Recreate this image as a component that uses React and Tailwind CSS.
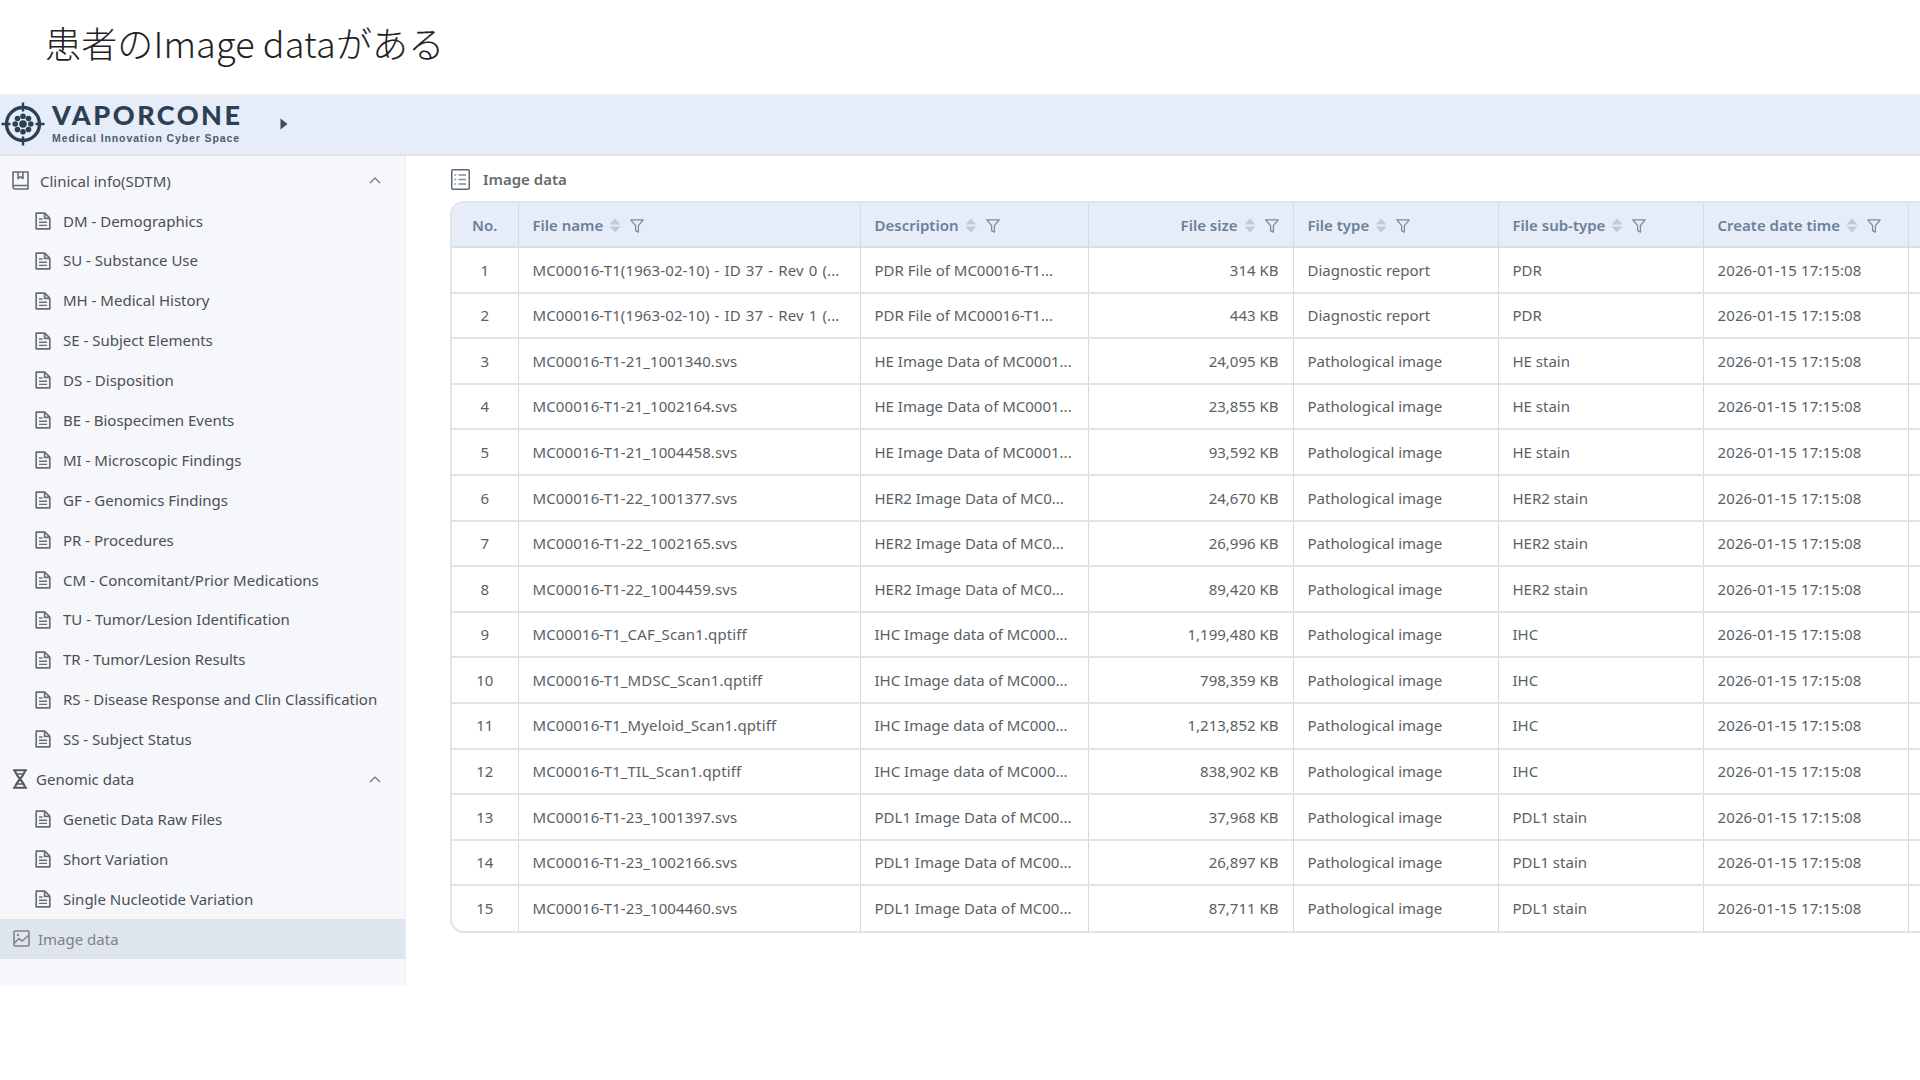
const clinicalItems = [
  'DM - Demographics',
  'SU - Substance Use',
  'MH - Medical History',
  'SE - Subject Elements',
  'DS - Disposition',
  'BE - Biospecimen Events',
  'MI - Microscopic Findings',
  'GF - Genomics Findings',
  'PR - Procedures',
  'CM - Concomitant/Prior Medications',
  'TU - Tumor/Lesion Identification',
  'TR - Tumor/Lesion Results',
  'RS - Disease Response and Clin Classification',
  'SS - Subject Status',
];

const genomicItems = ['Genetic Data Raw Files', 'Short Variation', 'Single Nucleotide Variation'];

const rows = [
  ['MC00016-T1(1963-02-10) - ID 37 - Rev 0 (...', 'PDR File of MC00016-T1...', '314 KB', 'Diagnostic report', 'PDR'],
  ['MC00016-T1(1963-02-10) - ID 37 - Rev 1 (...', 'PDR File of MC00016-T1...', '443 KB', 'Diagnostic report', 'PDR'],
  ['MC00016-T1-21_1001340.svs', 'HE Image Data of MC0001...', '24,095 KB', 'Pathological image', 'HE stain'],
  ['MC00016-T1-21_1002164.svs', 'HE Image Data of MC0001...', '23,855 KB', 'Pathological image', 'HE stain'],
  ['MC00016-T1-21_1004458.svs', 'HE Image Data of MC0001...', '93,592 KB', 'Pathological image', 'HE stain'],
  ['MC00016-T1-22_1001377.svs', 'HER2 Image Data of MC0...', '24,670 KB', 'Pathological image', 'HER2 stain'],
  ['MC00016-T1-22_1002165.svs', 'HER2 Image Data of MC0...', '26,996 KB', 'Pathological image', 'HER2 stain'],
  ['MC00016-T1-22_1004459.svs', 'HER2 Image Data of MC0...', '89,420 KB', 'Pathological image', 'HER2 stain'],
  ['MC00016-T1_CAF_Scan1.qptiff', 'IHC Image data of MC000...', '1,199,480 KB', 'Pathological image', 'IHC'],
  ['MC00016-T1_MDSC_Scan1.qptiff', 'IHC Image data of MC000...', '798,359 KB', 'Pathological image', 'IHC'],
  ['MC00016-T1_Myeloid_Scan1.qptiff', 'IHC Image data of MC000...', '1,213,852 KB', 'Pathological image', 'IHC'],
  ['MC00016-T1_TIL_Scan1.qptiff', 'IHC Image data of MC000...', '838,902 KB', 'Pathological image', 'IHC'],
  ['MC00016-T1-23_1001397.svs', 'PDL1 Image Data of MC00...', '37,968 KB', 'Pathological image', 'PDL1 stain'],
  ['MC00016-T1-23_1002166.svs', 'PDL1 Image Data of MC00...', '26,897 KB', 'Pathological image', 'PDL1 stain'],
  ['MC00016-T1-23_1004460.svs', 'PDL1 Image Data of MC00...', '87,711 KB', 'Pathological image', 'PDL1 stain'],
];

function DocIcon() {
  return (
    <svg viewBox="0 0 16 18" fill="none" stroke="#6a6e73" strokeWidth="1.7" className="w-4 h-[18px] shrink-0">
      <path d="M1.2 1.2h8.6l5 5v10.6H1.2z" strokeLinejoin="round" />
      <path d="M9.6 1.4v5h5" />
      <path d="M4 7h3.5M4 10.2h8M4 13.4h8" strokeWidth="1.4" />
    </svg>
  );
}

function BookIcon() {
  return (
    <svg viewBox="0 0 17 19" fill="none" stroke="#6a6e73" strokeWidth="1.6" className="w-[17px] h-[19px] shrink-0">
      <path d="M1 15.5V1h15v13.5H2.8A1.8 1.8 0 0 0 1 16.3 1.8 1.8 0 0 0 2.8 18H16v-3.5" strokeLinejoin="round" />
      <path d="M6 1v6.5l2.5-1.8L11 7.5V1" strokeLinejoin="round" />
    </svg>
  );
}

function DnaIcon() {
  return (
    <svg viewBox="0 0 16 20" fill="none" stroke="#55595e" strokeWidth="2.1" className="w-4 h-5 shrink-0">
      <path d="M1 1.2h14M1 18.8h14" />
      <path d="M3 1c0 6 10 12 10 18M13 1c0 6-10 12-10 18" />
      <path d="M4 5h8M4 15h8" strokeWidth="1.6" />
    </svg>
  );
}

function ImageIcon() {
  return (
    <svg viewBox="0 0 17 17" fill="none" stroke="#7d8287" strokeWidth="1.6" className="w-[17px] h-[17px] shrink-0">
      <rect x="1" y="1" width="15" height="15" rx="1" />
      <circle cx="5" cy="5" r="1.2" fill="#7d8287" stroke="none" />
      <path d="M1.5 13l4.5-4.5 3 2.5 6.5-5.5" />
    </svg>
  );
}

function ListIcon() {
  return (
    <svg viewBox="0 0 19 21" fill="none" stroke="#5d6877" className="w-[19px] h-[21px] shrink-0">
      <rect x="0.75" y="0.75" width="17.5" height="19.5" rx="1" strokeWidth="1.5" />
      <path d="M7.5 6h7.5M7.5 10.5h7.5M7.5 15h7.5" strokeWidth="1.6" stroke="#7f8a99" />
      <path d="M3.5 6h1.7M3.5 10.5h1.7M3.5 15h1.7" strokeWidth="1.6" stroke="#7f8a99" />
    </svg>
  );
}

function Chevron() {
  return (
    <svg viewBox="0 0 12 7" fill="none" stroke="#6b7075" strokeWidth="1.2" className="w-3 h-[7px] shrink-0">
      <path d="M1 6l5-5 5 5" />
    </svg>
  );
}

function SortCaret() {
  return (
    <svg viewBox="0 0 12 15" className="w-3 h-[15px] shrink-0" fill="#c2cad6">
      <path d="M6 0.5L11.5 6.5H0.5z" />
      <path d="M6 14.5L0.5 8.5h11z" />
    </svg>
  );
}

function FunnelIcon() {
  return (
    <svg viewBox="0 0 14 14" fill="none" stroke="#7a8aa2" strokeWidth="1.3" className="w-[14px] h-[14px] shrink-0 mt-0.5">
      <path d="M0.8 0.8h12.4L8.4 6.6v6.6L5.6 11.6V6.6z" strokeLinejoin="round" />
    </svg>
  );
}

function Logo() {
  const petals = [0, 45, 90, 135, 180, 225, 270, 315];
  return (
    <svg viewBox="0 0 44 44" className="w-11 h-11 shrink-0" fill="none" stroke="#2b4055">
      <circle cx="22" cy="22" r="16.5" strokeWidth="3.4" />
      <path d="M22 0.5v9M22 34.5v9M0.5 22h9M34.5 22h9" strokeWidth="2.4" />
      <circle cx="22" cy="22" r="3.8" fill="#2b4055" stroke="none" />
      {petals.map((a) => (
        <circle
          key={a}
          cx={22 + 7.8 * Math.cos((a * Math.PI) / 180)}
          cy={22 + 7.8 * Math.sin((a * Math.PI) / 180)}
          r="2.8"
          fill="#2b4055"
          stroke="none"
        />
      ))}
    </svg>
  );
}

function SideLink({ label }) {
  return (
    <div className="h-[39.9px] flex items-center gap-3 pl-[35px]">
      <DocIcon />
      <span className="text-[15px] text-[#4b4f54] whitespace-nowrap">{label}</span>
    </div>
  );
}

function SideGroup({ icon, label, gap }) {
  return (
    <div className="h-[39.9px] flex items-center justify-between pl-3 pr-6">
      <div className={`flex items-center ${gap}`}>
        {icon}
        <span className="text-[15px] text-[#4b4f54] whitespace-nowrap">{label}</span>
      </div>
      <Chevron />
    </div>
  );
}

function HeadCell({ label, right }) {
  return (
    <th className="bg-[#e6edf8] border-r border-[#d3dae6] px-[14px] pt-[1px] font-semibold text-[15px] text-[#6c7f99] text-left">
      <div className={`flex items-center gap-[6px] ${right ? 'justify-end' : ''}`}>
        <span className="whitespace-nowrap">{label}</span>
        <SortCaret />
        <span className="ml-[3px]"><FunnelIcon /></span>
      </div>
    </th>
  );
}

export default function App() {
  return (
    <div className="w-[1920px] h-[1080px] overflow-hidden bg-white font-['Noto_Sans','Noto_Sans_CJK_JP',sans-serif]">
      {/* Slide title */}
      <div className="h-[94px] pl-[45px] pt-[17px]">
        <h1 className="text-[36px] leading-[50px] font-light tracking-[0.15px] text-[#222] font-['Noto_Sans_CJK_JP',sans-serif]">
          患者のImage dataがある
        </h1>
      </div>

      {/* App header */}
      <div className="h-[62px] bg-[#e6edf8] border-b-2 border-[#e1e4ea] flex items-center pl-[1px]">
        <Logo />
        <div className="ml-[7px] w-[195px] -mt-[3px]">
          <div className="text-[27px] leading-[26px] font-black text-[#2b4055] tracking-[2.5px] font-['Lato',sans-serif]">
            VAPORCONE
          </div>
          <div className="text-[10.5px] leading-[12px] mt-[4px] font-bold text-[#4b5c6e] tracking-[0.9px] whitespace-nowrap font-['Liberation_Sans',sans-serif]">
            Medical Innovation Cyber Space
          </div>
        </div>
        <svg viewBox="0 0 8 12" fill="#3b4d60" className="w-2 h-3 ml-[33px]">
          <path d="M0.5 0.5L7.5 6 0.5 11.5z" />
        </svg>
      </div>

      <div className="flex">
        {/* Sidebar */}
        <aside className="w-[406px] h-[830px] shrink-0 bg-[#f5f7fb] border-r border-[#eceef2] pt-[5px]">
          <SideGroup icon={<BookIcon />} label="Clinical info(SDTM)" gap="gap-[11px]" />
          {clinicalItems.map((item) => (
            <SideLink key={item} label={item} />
          ))}
          <SideGroup icon={<DnaIcon />} label="Genomic data" gap="gap-[8px]" />
          {genomicItems.map((item) => (
            <SideLink key={item} label={item} />
          ))}
          <div className="h-[39.9px] bg-[#dfe5ed] flex items-center gap-2 pl-[13px]">
            <ImageIcon />
            <span className="text-[15px] text-[#7d8287]">Image data</span>
          </div>
        </aside>

        {/* Main */}
        <main className="pl-[44px] pt-[7px] min-w-0 flex-1">
          <div className="h-[33px] mb-[5px] flex items-center gap-[13px] pl-[1px]">
            <ListIcon />
            <span className="text-[15px] font-semibold text-[#666b71]">Image data</span>
          </div>
          <div className="w-[1520px] border-2 border-[#dfe4ec] rounded-tl-[14px] rounded-bl-[14px] overflow-hidden">
            <table className="table-fixed border-collapse w-[1518px]">
              <colgroup>
                <col className="w-[66px]" />
                <col className="w-[342px]" />
                <col className="w-[228px]" />
                <col className="w-[205px]" />
                <col className="w-[205px]" />
                <col className="w-[205px]" />
                <col className="w-[205px]" />
                <col className="w-[62px]" />
              </colgroup>
              <thead>
                <tr className="h-[44px] border-b-2 border-[#d9dfe9]">
                  <th className="bg-[#e6edf8] border-r border-[#d3dae6] pt-[1px] font-semibold text-[15px] text-[#6c7f99] text-center">No.</th>
                  <HeadCell label="File name" />
                  <HeadCell label="Description" />
                  <HeadCell label="File size" right />
                  <HeadCell label="File type" />
                  <HeadCell label="File sub-type" />
                  <HeadCell label="Create date time" />
                  <th className="bg-[#e6edf8]" />
                </tr>
              </thead>
              <tbody>
                {rows.map((row, i) => (
                  <tr key={i} className={`h-[45.6px] text-[15px] text-[#5b5f64] ${i < rows.length - 1 ? 'border-b-2 border-[#dfe4ec]' : ''}`}>
                    <td className="text-center border-r border-[#d3dae6]">{i + 1}</td>
                    <td className="px-[14px] border-r border-[#d3dae6] whitespace-nowrap overflow-hidden tracking-[0.12px] [word-spacing:1px]">{row[0]}</td>
                    <td className="px-[14px] border-r border-[#d3dae6] whitespace-nowrap overflow-hidden">{row[1]}</td>
                    <td className="px-[14px] text-right border-r border-[#d3dae6] whitespace-nowrap">{row[2]}</td>
                    <td className="px-[14px] border-r border-[#d3dae6] whitespace-nowrap">{row[3]}</td>
                    <td className="px-[14px] border-r border-[#d3dae6] whitespace-nowrap">{row[4]}</td>
                    <td className="px-[14px] border-r border-[#d3dae6] whitespace-nowrap tracking-[0.12px]">2026-01-15 17:15:08</td>
                    <td />
                  </tr>
                ))}
              </tbody>
            </table>
          </div>
        </main>
      </div>
    </div>
  );
}
